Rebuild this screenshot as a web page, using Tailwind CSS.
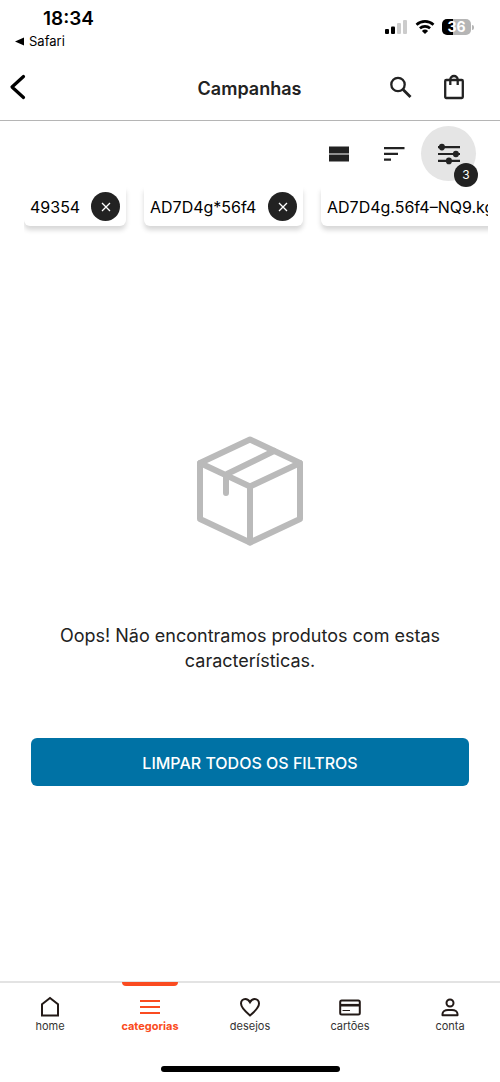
<!DOCTYPE html>
<html lang="pt">
<head>
<meta charset="utf-8">
<meta name="viewport" content="width=device-width, initial-scale=1">
<title>Campanhas</title>
<script src="https://cdn.jsdelivr.net/npm/@tailwindcss/browser@4"></script>
</head>
<body class="bg-white font-['Inter',sans-serif] text-[#222]">
<div class="flex min-h-screen flex-col overflow-hidden">

  <!-- Status bar -->
  <div class="flex h-[54px] items-start justify-between pr-[26px] pl-[15px] text-black">
    <div class="pt-[7px]">
      <div class="pl-7 text-[19px] leading-6 font-semibold">18:34</div>
      <a href="#" class="flex items-center gap-1 text-[13px] leading-5">
        <svg class="h-[9px] w-[10px]" viewBox="0 0 10 9" aria-hidden="true"><path d="M0 4.5 9 .5v8z"/></svg>Safari</a>
    </div>
    <div class="flex items-center gap-[7px] pt-[19px]">
      <svg class="h-4 w-[23px]" viewBox="0 0 23 16" aria-hidden="true">
        <rect x="0" y="10" width="4" height="5" rx="1"/><rect x="6" y="7.500" width="4" height="7.500" rx="1"/>
        <g fill="#ccc"><rect x="12" y="4" width="4" height="11" rx="1"/><rect x="18" y="1" width="4" height="14" rx="1"/></g>
      </svg>
      <svg class="h-4 w-5" viewBox="0 0 20 16" fill="none" stroke="#000" stroke-width="2.600" aria-hidden="true">
        <path d="M1.500 5.800a12.300 12.300 0 0 1 17 0"/><path d="M4.900 9.300a7.600 7.600 0 0 1 10.200 0"/><path fill="#000" stroke="none" d="M6.900 12a4.500 4.500 0 0 1 6.200 0L10 15z"/>
      </svg>
      <div class="flex items-center gap-px">
        <div class="flex h-4 w-[29px] items-center justify-center rounded-[5px] bg-linear-to-r from-black from-37% to-[#b5b5b5] to-37% text-[14px] leading-4 font-bold text-white">36</div>
        <div class="h-[5px] w-[2px] rounded-r-full bg-[#b5b5b5]"></div>
      </div>
    </div>
  </div>

  <!-- Header -->
  <header class="grid h-[67px] grid-cols-[1fr_auto_1fr] items-center border-b border-[#b5b5b5] pr-[35px] pl-2">
    <button class="w-5" aria-label="Voltar">
      <svg class="h-[26px] w-5" viewBox="0 0 20 26" fill="none" stroke="#000" stroke-width="3.200" stroke-linecap="round" stroke-linejoin="round"><path d="M15.500 2.500 4 13l11.500 10.500"/></svg>
    </button>
    <h1 class="pt-[3px] pl-[26px] text-[18px] leading-6 font-semibold">Campanhas</h1>
    <div class="flex justify-end gap-[30px]">
      <button aria-label="Pesquisar">
        <svg class="h-[26px] w-6" viewBox="0 0 24 26" fill="none" stroke="#222" stroke-width="2.300"><circle cx="9" cy="10.500" r="6.700"/><path stroke-width="2.800" d="m14 15.500 7.500 7.500"/></svg>
      </button>
      <button aria-label="Sacola">
        <svg class="h-[26px] w-[22px]" viewBox="0 0 22 26" fill="none" stroke="#222" stroke-width="2.300"><rect x="2.200" y="6" width="17.600" height="18" rx="1"/><path d="M7.300 11V5.700a3.700 3.700 0 0 1 7.400 0V11"/></svg>
      </button>
    </div>
  </header>

  <!-- List tools -->
  <div class="flex items-center justify-end pt-[5px] pr-6">
    <button class="mr-[34px]" aria-label="Visualização">
      <svg class="h-[18px] w-5" viewBox="0 0 20 18" fill="#222"><path d="M0 1.500h20v7H0zM0 9.500h20v7H0z"/></svg>
    </button>
    <button class="mr-4" aria-label="Ordenar">
      <svg class="h-[18px] w-[22px]" viewBox="0 0 22 18" fill="#222"><path d="M1 2h20.500v2.300H1zM1 7.700h14V10H1zM1 13.400h7v2.300H1z"/></svg>
    </button>
    <button class="relative flex size-[55px] items-center justify-center rounded-full bg-[#e5e5e5]" aria-label="Filtros, 3 ativos">
      <svg class="h-[22px] w-6" viewBox="0 0 24 22" fill="#222"><path d="M1 3h22v2.200H1zM1 9.900h22v2.200H1zM1 16.800h22V19H1z"/><rect x="2" y=".8" width="5.800" height="6.600" rx="2.800"/><rect x="16" y="7.700" width="5.800" height="6.600" rx="2.800"/><rect x="9" y="14.600" width="5.800" height="6.600" rx="2.800"/></svg>
      <span class="absolute -right-[2px] -bottom-[6px] flex size-6 items-center justify-center rounded-full bg-[#222] text-[12px] text-white">3</span>
    </button>
  </div>

  <!-- Active filters -->
  <ul class="mt-[6px] mr-3 ml-6 flex gap-[18px] overflow-hidden pb-[15px] text-[16px] leading-5 whitespace-nowrap text-black">
    <li class="flex h-[39px] w-[102px] shrink-0 items-center justify-between rounded-b-md bg-white px-[6px] shadow-[0_4px_5px_rgba(0,0,0,0.16)]">
      49354
      <button class="flex size-[29px] items-center justify-center rounded-full bg-[#222]" aria-label="Remover 49354"><svg class="size-[10px]" viewBox="0 0 10 10" stroke="#fff" stroke-width="1.300"><path d="m1 1 8 8M9 1 1 9"/></svg></button>
    </li>
    <li class="flex h-[39px] w-[159px] shrink-0 items-center justify-between rounded-b-md bg-white px-[6px] shadow-[0_4px_5px_rgba(0,0,0,0.16)]">
      AD7D4g*56f4
      <button class="flex size-[29px] items-center justify-center rounded-full bg-[#222]" aria-label="Remover AD7D4g*56f4"><svg class="size-[10px]" viewBox="0 0 10 10" stroke="#fff" stroke-width="1.300"><path d="m1 1 8 8M9 1 1 9"/></svg></button>
    </li>
    <li class="flex h-[39px] shrink-0 items-center rounded-b-md bg-white px-[6px] shadow-[0_4px_5px_rgba(0,0,0,0.16)]">AD7D4g.56f4–NQ9.kg</li>
  </ul>

  <!-- Empty state -->
  <main class="flex flex-1 flex-col items-center justify-center px-[31px]">
    <svg class="h-[110px] w-[106px]" viewBox="0 0 106 110" fill="none" stroke="#bababa" stroke-width="6" stroke-linejoin="round" stroke-linecap="round" aria-hidden="true">
      <path d="M53 3.500 103 27v56L53 106.500 3 83V27z"/><path d="M3 27l50 23.500L103 27M53 50.500v56M29 57V38.500L77 15"/>
    </svg>
    <p class="mt-[77px] max-w-[410px] text-center text-[18px] leading-[25px]">Oops! Não encontramos produtos com estas características.</p>
    <button class="mt-[65px] h-12 w-full rounded-md bg-[#0072a5] pt-[2px] text-[16px] font-medium text-white">LIMPAR TODOS OS FILTROS</button>
  </main>

  <!-- Tabs -->
  <nav class="grid grid-cols-5 border-t-2 border-[#e3e3e3] text-[11px] leading-[14px] text-[#333]">
    <a href="#" class="flex flex-col items-center pt-3">
      <svg class="h-6 w-6" viewBox="0 0 24 24" fill="none" stroke="#231a17" stroke-width="2"><path d="M4 9.300 12 3l8 6.300V20.500H4z"/></svg>home</a>
    <a href="#" aria-current="page" class="relative flex flex-col items-center pt-3 font-bold text-[#fa4b20]">
      <span class="absolute -top-px h-1 w-14 rounded-b-sm bg-[#fa4b20]"></span>
      <svg class="h-6 w-6" viewBox="0 0 24 24" stroke="#fa4b20" stroke-width="2"><path d="M2 6h20M2 12h20M2 18h20"/></svg>categorias</a>
    <a href="#" class="flex flex-col items-center pt-3">
      <svg class="h-6 w-6" viewBox="0 0 24 24" fill="none" stroke="#231a17" stroke-width="2"><path d="M12 20.500C8 17.200 3 13 3 8.600 3 5.800 5 4 7.300 4 9.500 4 11 5.300 12 7.200 13 5.300 14.500 4 16.700 4 19 4 21 5.800 21 8.600c0 4.400-5 8.600-9 11.900z"/></svg>desejos</a>
    <a href="#" class="flex flex-col items-center pt-3">
      <svg class="h-6 w-6" viewBox="0 0 24 24" fill="none" stroke="#231a17" stroke-width="2"><rect x="2.200" y="5.500" width="19.600" height="14" rx="1.500"/><path stroke-width="2.600" d="M2 10.200h20"/><path stroke-width="1" d="M4.500 15.500h7.500"/></svg>cartões</a>
    <a href="#" class="flex flex-col items-center pt-3">
      <svg class="h-6 w-6" viewBox="0 0 24 24" fill="none" stroke="#231a17" stroke-width="2" stroke-linejoin="round"><circle cx="12" cy="8" r="3.500"/><path d="M4.500 20.200v-1.200c0-2.500 2.500-4 5.500-4h4c3 0 5.500 1.500 5.500 4v1.200z"/></svg>conta</a>
  </nav>
  <div class="flex justify-center pt-[33px] pb-[10px]"><div class="h-[6px] w-[179px] rounded-full bg-black"></div></div>
</div>
</body>
</html>
